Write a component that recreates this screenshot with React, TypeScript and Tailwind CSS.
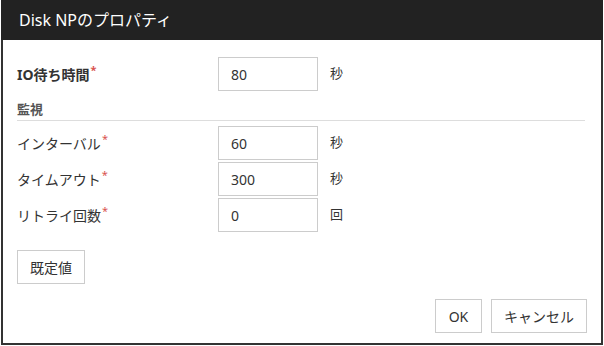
import React from "react";

const font = { fontFamily: '"Noto Sans", "Noto Sans CJK JP", sans-serif' };

interface RowProps {
  label: string;
  value: string;
  unit: string;
  bold?: boolean;
}

const Req = () => <span className="text-[#d9534f] text-[11px] ml-[1px] relative top-[-6px]">*</span>;

const FieldRow = ({ label, value, unit, bold }: RowProps) => (
  <div className="flex items-center h-[34px]">
    <div className={`w-[201px] text-[14px] text-[#333] ${bold ? "font-bold" : ""}`}>
      {label}
      <Req />
    </div>
    <div className="w-[100px] h-[34px] border border-[#ccc] flex items-center px-[12px] text-[14px] text-[#333]">
      {value}
    </div>
    <div className="ml-[12px] text-[13px] text-[#333]">{unit}</div>
  </div>
);

const App = () => {
  const rows = [
    { label: "インターバル", value: "60", unit: "秒" },
    { label: "タイムアウト", value: "300", unit: "秒" },
    { label: "リトライ回数", value: "0", unit: "回" },
  ];

  return (
    <div className="w-[604px] h-[346px] bg-white" style={font}>
      <div className="ml-[1px] w-[602px] h-[345px] border-2 border-t-0 border-[#333] flex flex-col">
        {/* title bar */}
        <div className="h-[40px] bg-[#222] text-white text-[16px] flex items-center -mx-[2px] pl-[18px]">
          Disk NPのプロパティ
        </div>
        <div className="px-[14px] pt-[17px]">
          <FieldRow label="IO待ち時間" value="80" unit="秒" bold />
          <div className="mt-[8px] h-[22px] text-[13px] font-bold text-[#555] flex items-center border-b border-[#ddd] mr-[2px]">
            監視
          </div>
          <div className="mt-[5px] flex flex-col gap-[2px]">
            {rows.map((r) => (
              <FieldRow key={r.label} label={r.label} value={r.value} unit={r.unit} />
            ))}
          </div>
          <button className="mt-[18px] h-[34px] px-[12px] border border-[#ccc] text-[14px] text-[#333] bg-white">
            既定値
          </button>
          <div className="mt-[15px] flex justify-end gap-[9px]">
            <button className="h-[34px] w-[47px] border border-[#ccc] text-[14px] text-[#333] bg-white">
              OK
            </button>
            <button className="h-[34px] w-[96px] border border-[#ccc] text-[14px] text-[#333] bg-white">
              キャンセル
            </button>
          </div>
        </div>
      </div>
    </div>
  );
};

export default App;
